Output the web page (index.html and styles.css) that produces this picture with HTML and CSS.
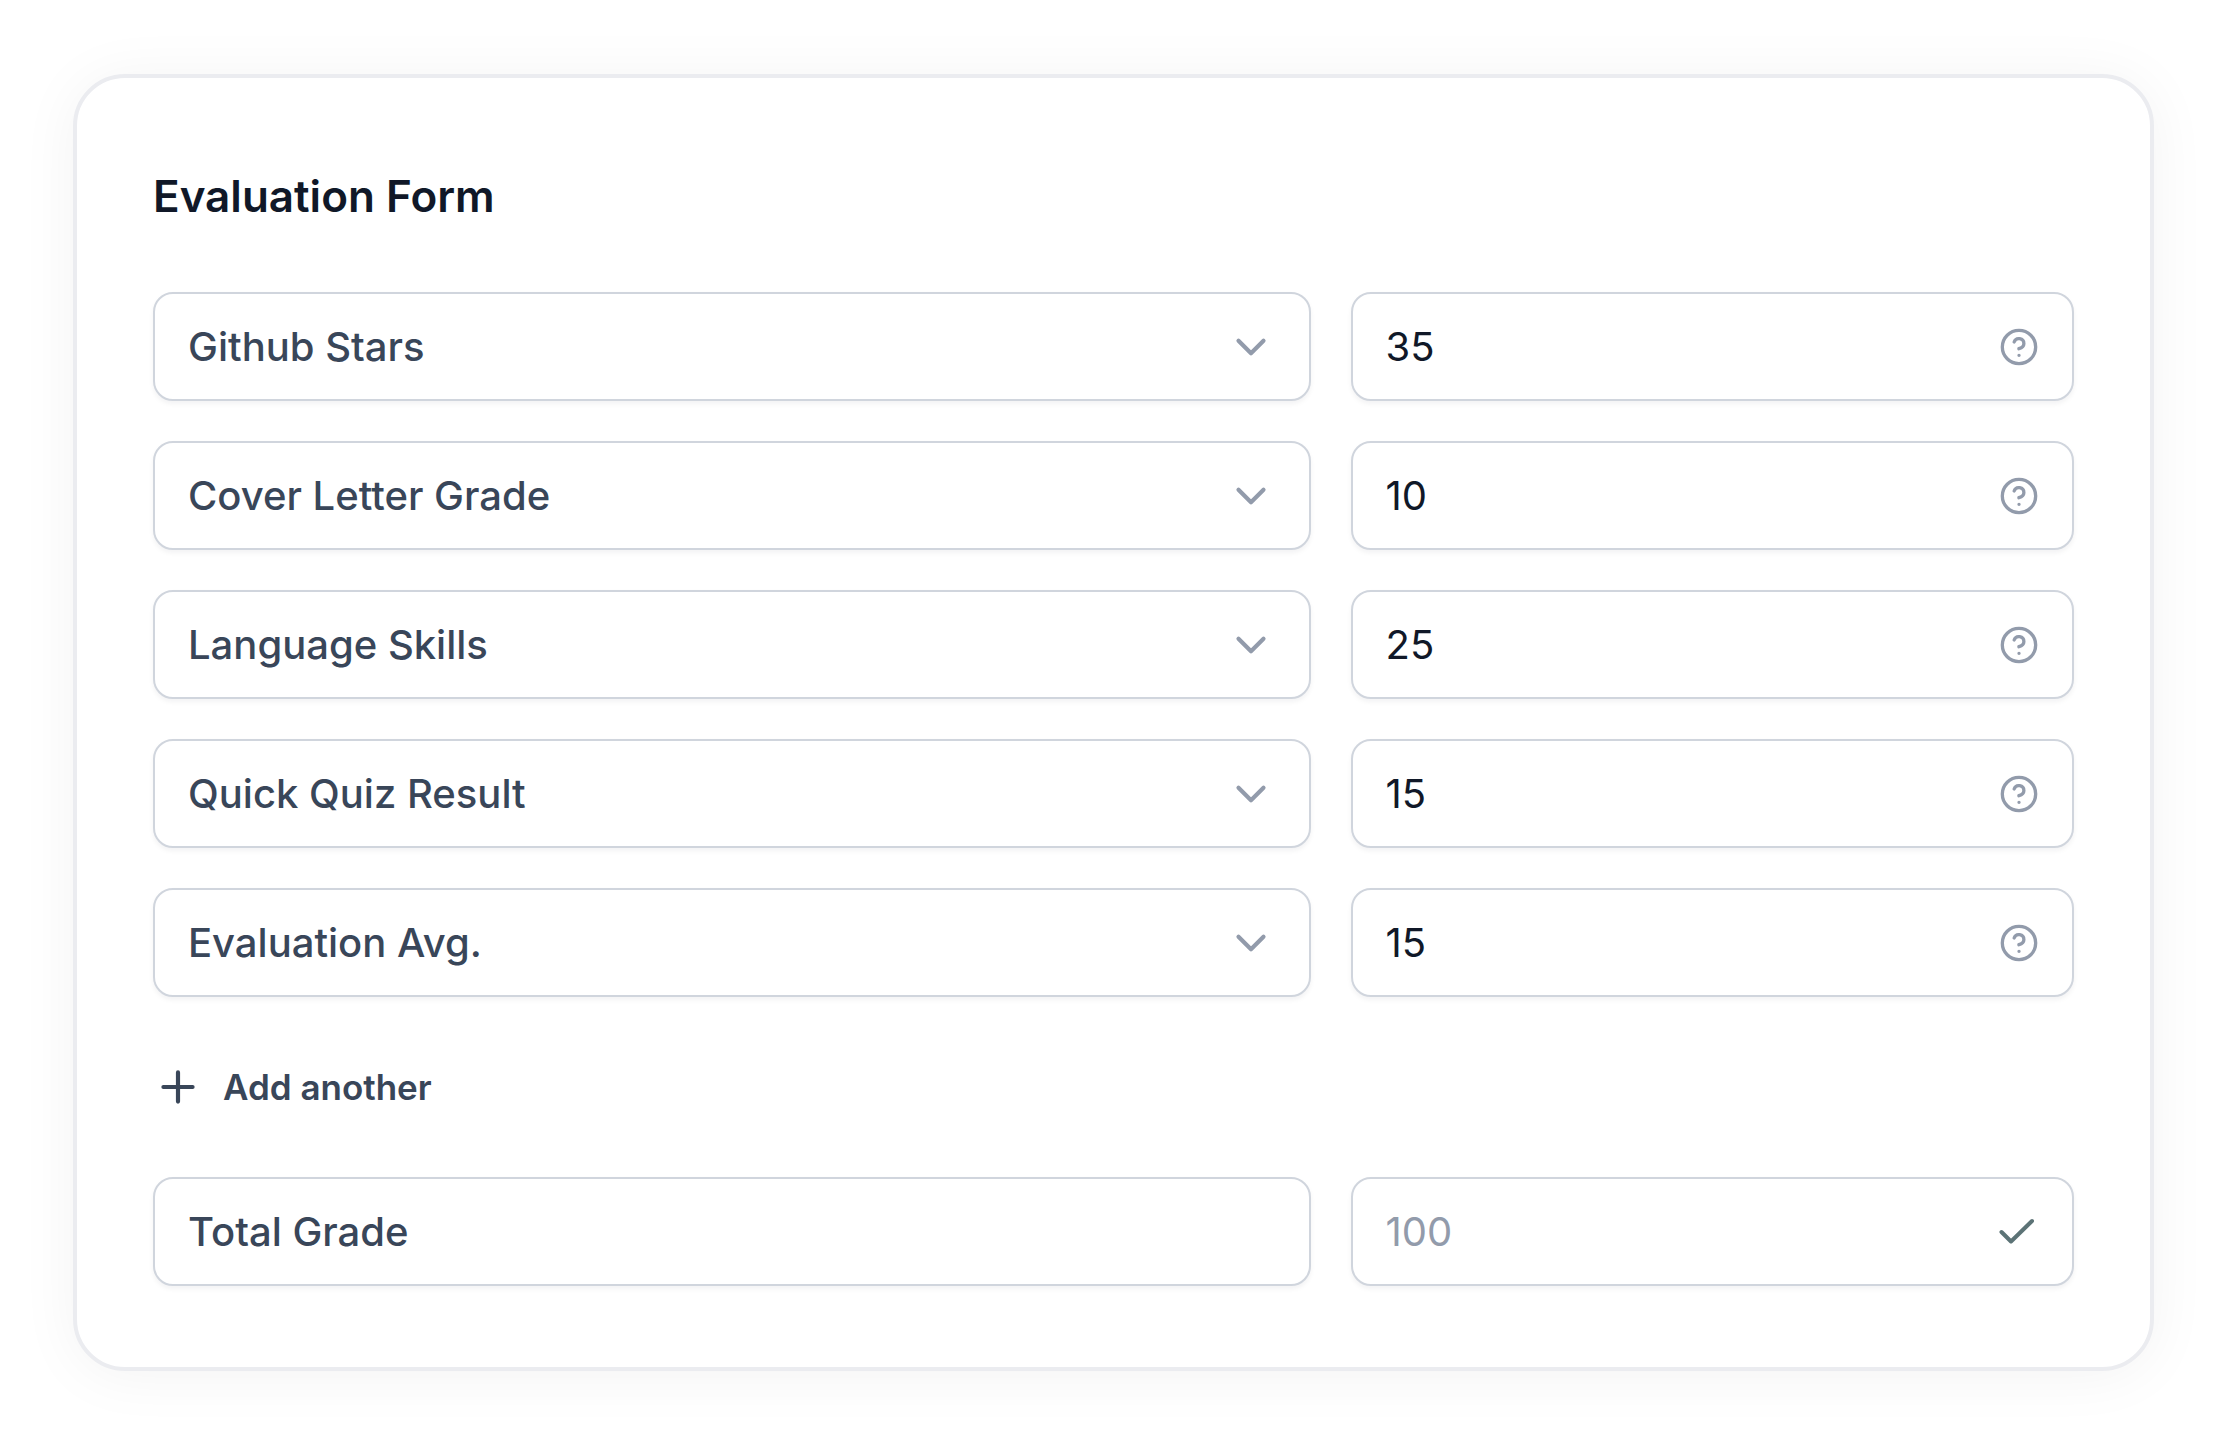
FILE: index.html
```
<!DOCTYPE html>
<html lang="en">
<head>
    <meta charset="UTF-8">
    <meta name="viewport" content="width=device-width, initial-scale=1.0">
    <title>Evaluation Form</title>
    <link rel="stylesheet" href="styles.css">
</head>
<body>

    <!-- shared icons -->
    <svg class="sprite" aria-hidden="true">
        <symbol id="chevron" viewBox="0 0 20 20">
            <path d="M5 7.5L10 12.5L15 7.5" stroke-width="1.67"/>
        </symbol>
        <symbol id="help" viewBox="0 0 16 16">
            <circle cx="8" cy="8" r="6.67" stroke-width="1.33"/>
            <path d="M6.06 6a2 2 0 0 1 3.89.67c0 1.33-2 2-2 2M8 11.33h.01" stroke-width="1.33"/>
        </symbol>
        <symbol id="check" viewBox="0 0 40 40">
            <path d="M33 9L12 29.5L2.5 20" stroke-width="4"/>
        </symbol>
        <symbol id="plus" viewBox="0 0 20 20">
            <path d="M10 4.17V15.83M4.17 10H15.83" stroke-width="1.67"/>
        </symbol>
    </svg>

    <form class="card">
        <h1 class="title">Evaluation Form</h1>

        <div class="rows">
            <div class="row">
                <div class="field">
                    <select class="control" aria-label="Criterion 1">
                        <option>Github Stars</option>
                    </select>
                    <svg class="icon icon-chevron"><use href="#chevron"/></svg>
                </div>
                <div class="field">
                    <input class="control number" type="text" inputmode="numeric" value="35" aria-label="Weight 1">
                    <svg class="icon"><use href="#help"/></svg>
                </div>
            </div>
            <div class="row">
                <div class="field">
                    <select class="control" aria-label="Criterion 2">
                        <option>Cover Letter Grade</option>
                    </select>
                    <svg class="icon icon-chevron"><use href="#chevron"/></svg>
                </div>
                <div class="field">
                    <input class="control number" type="text" inputmode="numeric" value="10" aria-label="Weight 2">
                    <svg class="icon"><use href="#help"/></svg>
                </div>
            </div>
            <div class="row">
                <div class="field">
                    <select class="control" aria-label="Criterion 3">
                        <option>Language Skills</option>
                    </select>
                    <svg class="icon icon-chevron"><use href="#chevron"/></svg>
                </div>
                <div class="field">
                    <input class="control number" type="text" inputmode="numeric" value="25" aria-label="Weight 3">
                    <svg class="icon"><use href="#help"/></svg>
                </div>
            </div>
            <div class="row">
                <div class="field">
                    <select class="control" aria-label="Criterion 4">
                        <option>Quick Quiz Result</option>
                    </select>
                    <svg class="icon icon-chevron"><use href="#chevron"/></svg>
                </div>
                <div class="field">
                    <input class="control number" type="text" inputmode="numeric" value="15" aria-label="Weight 4">
                    <svg class="icon"><use href="#help"/></svg>
                </div>
            </div>
            <div class="row">
                <div class="field">
                    <select class="control" aria-label="Criterion 5">
                        <option>Evaluation Avg.</option>
                    </select>
                    <svg class="icon icon-chevron"><use href="#chevron"/></svg>
                </div>
                <div class="field">
                    <input class="control number" type="text" inputmode="numeric" value="15" aria-label="Weight 5">
                    <svg class="icon"><use href="#help"/></svg>
                </div>
            </div>
        </div>

        <button class="add" type="button">
            <svg class="add-icon"><use href="#plus"/></svg>
            Add another
        </button>

        <div class="row">
            <label class="control total-label" for="total">Total Grade</label>
            <div class="field">
                <input class="control number" id="total" type="text" placeholder="100" readonly>
                <svg class="icon icon-check"><use href="#check"/></svg>
            </div>
        </div>
    </form>

</body>
</html>
```
FILE: styles.css
```
*{
    padding: 0;
    margin: 0;
    box-sizing: border-box;
}
body{
    padding: 74px 71px 73px 73px;
    background-color: white;
    font-family: Inter, sans-serif;
    color: #394659;
}
svg{
    fill: none;
    stroke: currentColor;
    stroke-linecap: round;
    stroke-linejoin: round;
}
.sprite{
    position: absolute;
    width: 0;
    height: 0;
}
.card{
    padding: 90px 76px 81px;
    background-color: white;
    border: 4px solid #ebecf0;
    border-radius: 52px;
    box-shadow: 0 4px 60px rgba(0,0,0,0.05);
}
.title{
    margin-bottom: 68px;
    font-size: 44px;
    line-height: 56px;
    font-weight: 600;
    color: #101828;
}
.rows{
    display: flex;
    flex-direction: column;
    gap: 40px;
}
.row{
    display: grid;
    grid-template-columns: 8fr 5fr;
    gap: 40px;
}
.field{
    position: relative;
}
.control{
    display: block;
    width: 100%;
    height: 109px;
    padding: 0 33px;
    appearance: none;
    background-color: white;
    border: 2px solid #d0d5dd;
    border-radius: 20px;
    box-shadow: 0 3px 5px rgba(16,24,40,0.05);
    font-family: inherit;
    font-size: 40px;
    line-height: 60px;
    font-weight: 500;
    color: #394659;
}
.number{
    font-weight: 400;
    color: #101828;
}
.number::placeholder{
    color: #929bab;
    opacity: 1;
}
.total-label{
    display: flex;
    align-items: center;
}
.icon{
    position: absolute;
    top: 50%;
    right: 35px;
    width: 40px;
    height: 40px;
    transform: translateY(-50%);
    color: #929bab;
    pointer-events: none;
}
.icon-chevron{
    width: 50px;
    height: 50px;
}
.icon-check{
    color: #5c7376;
}
.add{
    display: flex;
    align-items: center;
    gap: 20px;
    margin: 65px 0;
    background: none;
    border: none;
    font-family: inherit;
    font-size: 35px;
    line-height: 50px;
    font-weight: 600;
    color: #394659;
    cursor: pointer;
}
.add-icon{
    width: 50px;
    height: 50px;
}
@media only screen and (max-width:768px){
    body{
        padding: 20px;
    }
    .card{
        padding: 30px 20px;
        border-radius: 30px;
    }
    .row{
        grid-template-columns: 1fr;
        gap: 16px;
    }
}
```
